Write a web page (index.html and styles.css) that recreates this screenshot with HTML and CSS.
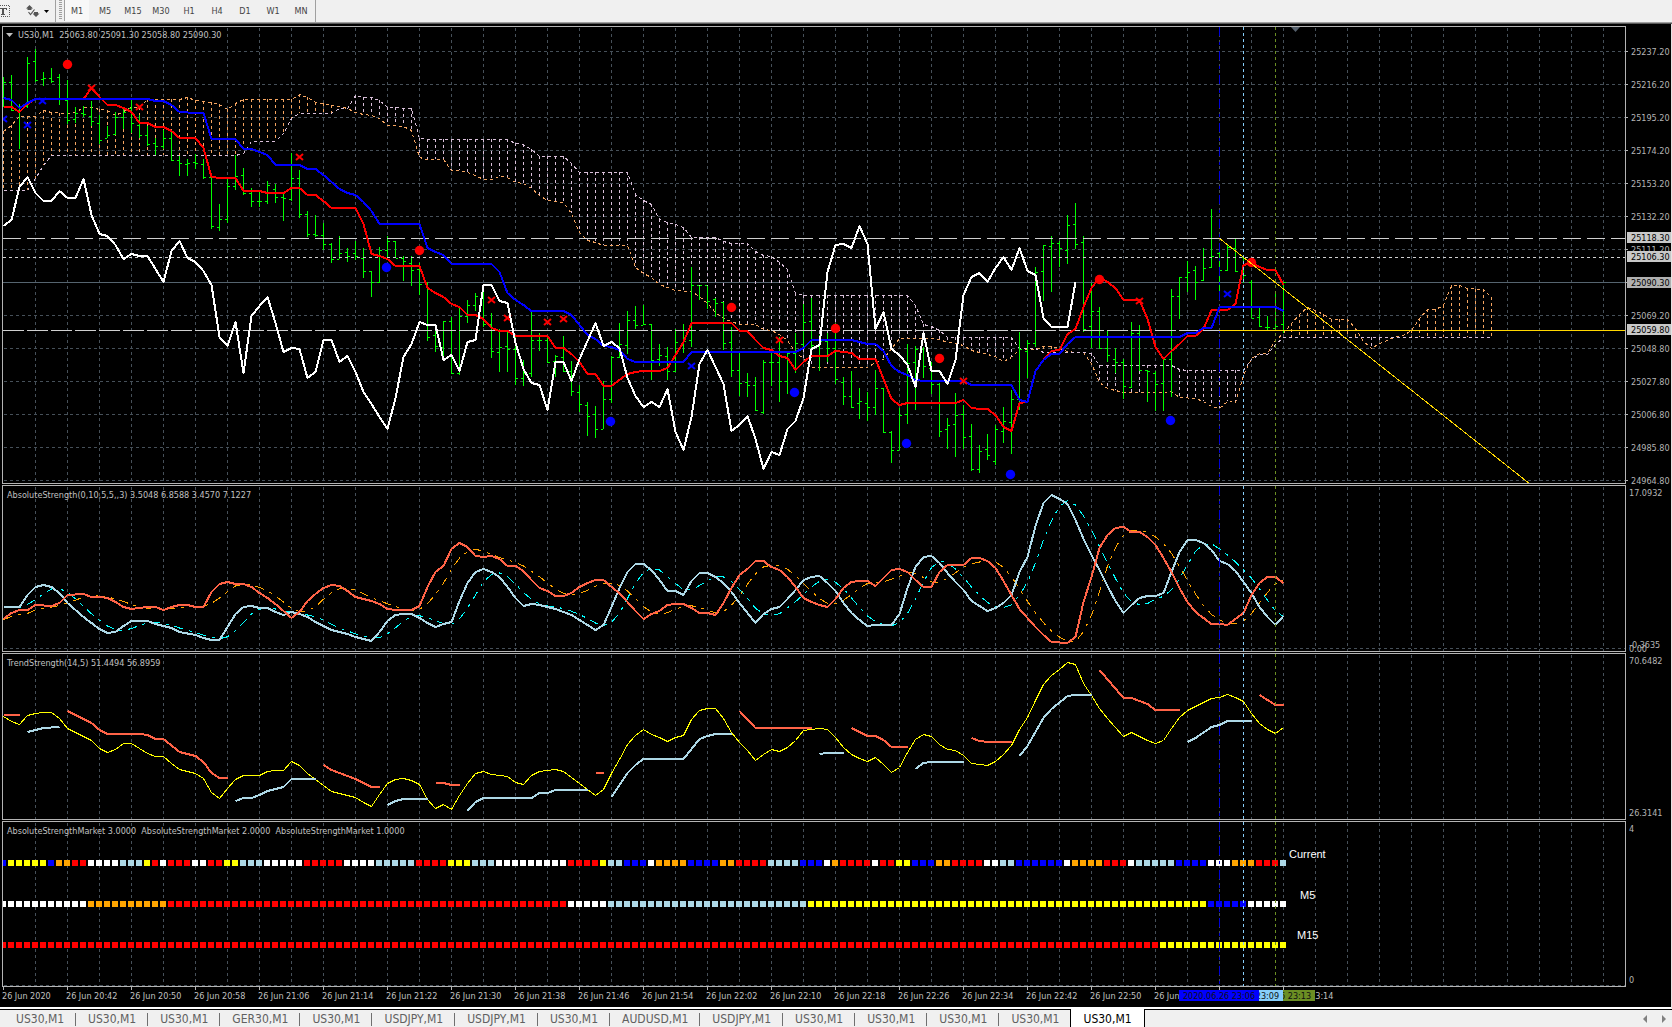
FILE: index.html
```html
<!DOCTYPE html>
<html lang="en">
<head>
<meta charset="utf-8">
<title>US30,M1</title>
<link rel="stylesheet" href="styles.css">
</head>
<body>
<header class="toolbar">
  <button class="tool tool-text" aria-label="Text label">
    <svg width="10" height="14" viewBox="0 0 10 14"><path d="M0 1.5H9.5V12.5H0" fill="none" stroke="#555" stroke-dasharray="1 1"/><path d="M0 4h7v2H6V5H4v5h1v1H1v-1h1V5H0z" fill="#555"/></svg>
  </button>
  <button class="tool tool-arrows" aria-label="Arrows">
    <svg width="24" height="14" viewBox="0 0 24 14"><path d="M3.500 1l3.500 3.500H5.500V6h-4V4.500H0z" fill="#555"/><path d="M10 13L6.500 9.500H8V8h4v1.500h1.500z" fill="#555"/><path d="M2.500 8l2 2.500L8.500 5.500" fill="none" stroke="#555" stroke-width="1.200"/><path d="M18 6h5l-2.500 3z" fill="#000"/></svg>
  </button>
  <span class="grip"></span>
  <nav class="frames" aria-label="Timeframes">
    <button class="frame frame-on">M1</button><button class="frame">M5</button><button class="frame">M15</button><button class="frame">M30</button><button class="frame">H1</button><button class="frame">H4</button><button class="frame">D1</button><button class="frame">W1</button><button class="frame">MN</button>
  </nav>
</header>
<main class="window">
  <section class="pane">
    <div class="plot"><svg id="price" class="canvas canvas-price"></svg>
      <h1 class="caption caption-main">US30,M1  25063.80 25091.30 25058.80 25090.30</h1></div>
    <svg id="price-axis" class="axis"></svg>
  </section>
  <section class="pane">
    <div class="plot"><svg id="strength" class="canvas canvas-sub"></svg>
      <h2 class="caption">AbsoluteStrength(0,10,5,5,,3) 3.5048 6.8588 3.4570 7.1227</h2></div>
    <svg id="strength-axis" class="axis"></svg>
  </section>
  <section class="pane">
    <div class="plot"><svg id="trend" class="canvas canvas-sub"></svg>
      <h2 class="caption">TrendStrength(14,5) 51.4494 56.8959</h2></div>
    <svg id="trend-axis" class="axis"></svg>
  </section>
  <section class="pane">
    <div class="plot"><svg id="market" class="canvas canvas-market"></svg>
      <h2 class="caption">AbsoluteStrengthMarket 3.0000  AbsoluteStrengthMarket 2.0000  AbsoluteStrengthMarket 1.0000</h2></div>
    <svg id="market-axis" class="axis"></svg>
  </section>
  <div class="times">
    <span>26 Jun 2020</span><span>26 Jun 20:42</span><span>26 Jun 20:50</span><span>26 Jun 20:58</span><span>26 Jun 21:06</span><span>26 Jun 21:14</span><span>26 Jun 21:22</span><span>26 Jun 21:30</span><span>26 Jun 21:38</span><span>26 Jun 21:46</span><span>26 Jun 21:54</span><span>26 Jun 22:02</span><span>26 Jun 22:10</span><span>26 Jun 22:18</span><span>26 Jun 22:26</span><span>26 Jun 22:34</span><span>26 Jun 22:42</span><span>26 Jun 22:50</span><span>26 Jun 22:58</span><span>26 Jun 23:06</span><span>26 Jun 23:14</span>
    <b class="stamp stamp-olive">2020.06.26 23:13</b>
    <b class="stamp stamp-sky">2020.06.26 23:09</b>
    <b class="stamp stamp-blue">2020.06.26 23:06</b>
  </div>
</main>
<footer class="tabs">
  <nav class="tablist" aria-label="Charts">
    <a class="tab" href="#">US30,M1</a><a class="tab" href="#">US30,M1</a><a class="tab" href="#">US30,M1</a><a class="tab" href="#">GER30,M1</a><a class="tab" href="#">US30,M1</a><a class="tab" href="#">USDJPY,M1</a><a class="tab" href="#">USDJPY,M1</a><a class="tab" href="#">US30,M1</a><a class="tab" href="#">AUDUSD,M1</a><a class="tab" href="#">USDJPY,M1</a><a class="tab" href="#">US30,M1</a><a class="tab" href="#">US30,M1</a><a class="tab" href="#">US30,M1</a><a class="tab" href="#">US30,M1</a><a class="tab tab-on" href="#">US30,M1</a>
  </nav>
  <button class="scroll" aria-label="Scroll left"><svg width="4" height="8"><path d="M4 0v8L0 4z" fill="#808080"/></svg></button>
  <button class="scroll" aria-label="Scroll right"><svg width="4" height="8"><path d="M0 0v8l4-4z" fill="#808080"/></svg></button>
</footer>
<script src="chart.js"></script>
</body>
</html>
```
FILE: styles.css
```css
* { box-sizing: border-box; }
body {
  margin: 0;
  background: #f0f0f0;
  font: 9px/12px "DejaVu Sans Condensed", "DejaVu Sans", sans-serif;
}
button { border: 0; padding: 0; background: none; font: inherit; color: inherit; }
svg { display: block; }

.toolbar {
  display: flex;
  align-items: stretch;
  height: 24px;
  border-bottom: 1px solid #5a5a5a;
  box-shadow: inset 0 -1px #a0a0a0;
  color: #444;
}
.tool { display: flex; align-items: center; padding-bottom: 2px; }
.tool-text { width: 26px; }
.tool-arrows { width: 30px; border-right: 1px solid #a0a0a0; }
.grip {
  width: 3px;
  margin: 0 3px 4px;
  background: repeating-linear-gradient(#a0a0a0 0 1px, #f0f0f0 1px 2px);
}
.frames { display: flex; gap: 4px; padding: 0 2px 2px 0; border-right: 1px solid #a0a0a0; }
.frame { width: 24px; height: 21px; text-align: center; }
.frame-on {
  background: #f8f8f8;
  box-shadow: -1px 0 #a0a0a0;
}

.window {
  padding-top: 2px;
  background: #000;
  border-right: 1px solid #e3e3e3;
  border-bottom: 2px solid #fff;
  color: #c0c0c0;
}
.pane { display: flex; padding-left: 2px; margin-bottom: 1px; }
.pane:nth-child(4) { margin-bottom: 0; }
.plot { position: relative; flex: 1; min-width: 0; border: 1px solid #b4b4b4; }
.canvas { width: 100%; overflow: hidden; }
.canvas-price { height: 456px; }
.canvas-sub { height: 165px; }
.canvas-market { height: 164px; }
.axis { width: 45px; overflow: hidden; fill: #b4b4b4; align-self: stretch; height: auto; }
.caption {
  position: absolute;
  top: 3px;
  left: 4px;
  margin: 0;
  font-size: 9px;
  font-weight: 400;
  white-space: pre;
}
.caption-main { top: 2px; left: 15px; }
.note { fill: #fff; font: 11px "Liberation Sans", sans-serif; }

.times {
  position: relative;
  display: flex;
  height: 20px;
  padding: 3px 0 0 2px;
  overflow: hidden;
  background: repeating-linear-gradient(90deg, transparent 0 3px, #b4b4b4 3px 4px, transparent 4px 64px) 0 0 / 1284px 3px no-repeat;
}
.times span { flex: none; width: 64px; white-space: nowrap; }
.stamp {
  position: absolute;
  top: 3px;
  width: 80px;
  height: 11px;
  line-height: 12px;
  font-weight: 400;
  text-align: center;
  color: #101010;
}
.stamp-olive { left: 1235px; background: #6b8e23; }
.stamp-sky { left: 1203px; background: #87cefa; }
.stamp-blue { left: 1179px; background: #00f; }

.tabs {
  display: flex;
  height: 18px;
  background: #f0f0f0;
  color: #606060;
  font-size: 12px;
  line-height: 18px;
}
.tablist { display: flex; flex: 1; padding-left: 4px; border-top: 1px solid #000; }
.tab {
  padding: 0 12px;
  height: 17px;
  color: inherit;
  text-decoration: none;
  background: linear-gradient(#707070, #707070) right 3px / 1px 13px no-repeat;
}
.tab-on {
  height: 18px;
  margin: -1px 0 0 -1px;
  padding-top: 1px;
  background: #fff;
  border: solid #000;
  border-width: 0 1px;
  color: #000;
}
.scroll { width: 19px; padding-left: 8px; border-top: 1px solid #000; }
.scroll:last-child { width: 18px; }
```
FILE: chart.js
```js
const NS = 'http://www.w3.org/2000/svg';
const STEP = 8;
const barX = k => 3.5 + STEP * k;

function add(parent, tag, attrs, text) {
  const el = document.createElementNS(NS, tag);
  for (const name in attrs) el.setAttribute(name, attrs[name]);
  if (text !== undefined) el.textContent = text;
  parent.appendChild(el);
  return el;
}

// Points are written "bar,y"; y counts from the top of the window.
const parse = s => s.trim().split(/\s+/).map(p => p.split(',').map(Number));

function fill(points) {
  const out = [];
  points.forEach(([k, y], i) => {
    if (i) {
      const [pk, py] = points[i - 1];
      for (let j = pk + 1; j < k; j++) out[j] = py + (y - py) * (j - pk) / (k - pk);
    }
    out[k] = y;
  });
  return out;
}

function line(g, points, stroke, width, dash) {
  const shift = width === 1 ? 0.5 : 0;
  add(g, 'polyline', {
    points: points.map(([k, y]) => barX(k) + ',' + (y + shift)).join(' '),
    fill: 'none', stroke, 'stroke-width': width,
    'stroke-dasharray': dash || 'none', 'stroke-linejoin': 'round',
    'shape-rendering': 'crispEdges'
  });
}

function rule(g, x1, y1, x2, y2, stroke, dash) {
  return add(g, 'line', { x1, y1, x2, y2, stroke, 'stroke-dasharray': dash || 'none', 'shape-rendering': 'crispEdges' });
}

const GRID = '#465059';

function pane(id, top, height) {
  const g = add(document.getElementById(id), 'g', { transform: `translate(-3 ${-top})` });
  for (let x = 35.5; x < 4000; x += 32) rule(g, x, top + 1, x, top + height, GRID, '3 3');
  return g;
}

function verticals(g, top, height) {
  rule(g, 1219.5, top, 1219.5, top + height, '#0000d8', '9 6 3 6');
  rule(g, 1243.5, top, 1243.5, top + height, '#87cefa', '3 3');
  rule(g, 1275.5, top, 1275.5, top + height, '#6b8e23', '3 3');
}

function label(g, x, y, text, attrs) {
  add(g, 'text', Object.assign({ x, y: y + 3 }, attrs), text);
}

// ---------- price pane ----------
const spanA = parse(`0,131 1,125 2,116 4,116 5,110 6,112 8,113 9,112 10,107 11,107 12,109 13,110 14,115 15,111 16,107 17,107 18,99 22,99 23,97
24,100 25,101 26,102 27,104 28,109 29,103 30,99 36,99 37,94 38,97 39,102 40,103 41,105 42,106 43,108 44,112 45,114 46,115 47,118 48,125 50,126
51,130 52,157 53,159 55,159 56,170 57,170 58,172 59,175 60,179 61,179 62,176 63,177 64,182 65,183 66,188 67,195 68,200 69,201 70,202 71,213
72,232 73,240 74,242 75,245 78,245 79,267 80,273 81,277 82,284 83,287 84,290 86,291 87,296 88,303 89,312 90,318 91,321 92,324 94,324 95,329
96,330 97,334 98,340 99,352 100,358 101,367 108,367 109,362 110,359 111,348 112,338 116,338 117,339 118,342 119,343 120,345 121,350 122,352
123,354 124,356 125,361 126,357 127,349 129,349 130,346 131,346 132,348 133,351 134,352 135,352 136,363 137,382 138,388 139,390 140,392 145,392
146,391 147,397 149,398 150,401 151,406 152,408 153,401 154,402 155,375 156,358 157,353 158,353 159,340 160,333 161,323 162,314 163,307 164,310
165,314 166,319 168,319 169,328 170,341 171,348 172,343 173,340 174,336 175,335 176,330 177,318 178,309 179,309 180,305 181,285 182,285 183,288
185,289 186,297`);
const spanB = parse(`0,190 3,190 4,178 5,165 6,155 29,155 30,153 31,141 34,141 35,133 36,118 37,113 41,113 42,108 43,108 44,95 45,97 46,97 47,100
48,107 51,108 52,138 53,139 63,139 64,143 65,144 66,149 67,156 70,156 71,163 72,172 78,172 79,194 80,200 81,204 82,219 83,222 84,224 85,227
86,237 89,237 90,241 91,243 93,243 94,251 95,255 96,256 97,262 98,269 99,293 100,295 113,295 114,305 115,324 116,326 117,330 118,337 126,337
127,348 129,348 130,352 135,352 136,353 137,365 146,365 147,369 148,370 155,370 156,359 157,354 158,354 159,344 160,337 186,337`);
const kijun = parse(`0,98 1,100 2,108 3,103 4,99 18,99 19,101 20,101 21,105 22,112 24,113 25,113 26,139 29,139 30,149 31,149 32,152 33,155 34,165
37,165 38,169 39,169 40,175 41,182 42,189 43,193 44,195 45,202 46,211 47,224 52,224 53,248 54,252 55,255 56,264 61,264 62,272 63,293 64,300
65,305 66,311 70,311 71,315 72,325 73,335 74,339 75,346 76,347 77,350 78,359 79,362 85,362 86,352 99,352 100,348 101,340 106,340 107,342
108,344 109,344 110,351 111,366 112,372 113,375 114,380 115,381 120,381 121,385 126,385 127,400 128,402 129,371 130,360 131,354 132,354 133,344
134,337 147,337 148,333 149,333 150,328 151,328 152,307 159,307 160,311`);
const tenkan = parse(`0,107 1,107 2,112 3,104 4,99 10,99 11,88 12,97 13,105 14,105 15,108 16,112 17,123 18,123 19,127 20,127 21,131 22,138 24,138
25,148 26,177 27,178 29,178 30,191 32,191 33,193 35,193 36,188 37,188 38,195 39,195 40,201 41,208 44,208 45,224 46,254 47,256 48,259 49,266
52,266 53,288 54,293 55,297 56,304 57,307 58,315 59,315 60,319 61,328 62,331 63,331 64,336 68,336 69,348 70,348 71,354 72,362 73,374 74,374
75,386 76,386 77,380 78,374 79,372 80,371 82,371 83,368 84,355 85,342 86,323 91,323 92,331 93,331 94,340 95,348 96,350 97,356 98,358 99,370
100,362 101,356 103,356 104,351 105,352 106,353 107,359 109,359 110,379 111,399 112,405 113,403 119,403 120,400 121,408 122,409 123,409 124,415
125,427 126,431 127,403 128,402 129,371 130,360 131,351 132,350 133,334 134,329 135,307 136,288 137,277 138,282 139,288 140,300 142,300 143,319
144,347 145,359 146,351 147,344 148,336 149,336 150,329 151,310 153,310 154,304 155,265 156,263 157,267 158,270 159,270 160,285`);
const chikou = parse(`0,226 1,220 2,187 3,177 4,193 5,201 6,201 7,191 8,198 9,198 10,179 11,215 12,234 13,236 14,245 15,259 16,254 17,256 18,256
19,269 20,282 21,251 22,241 23,258 24,262 25,271 26,285 27,337 28,346 29,322 30,373 31,316 32,306 33,297 34,323 35,352 36,348 37,349 38,378
39,372 40,340 41,340 42,362 43,356 44,372 45,392 46,404 47,417 48,429 49,398 50,357 51,344 52,322 53,325 54,325 55,360 56,355 57,371 58,342
59,340 60,285 61,285 62,301 63,303 64,343 65,369 66,383 67,385 68,410 69,362 70,362 71,381 72,359 73,341 74,323 75,346 76,342 77,348 78,378
79,396 80,407 81,402 82,407 83,389 84,432 85,450 86,417 87,364 88,350 89,367 90,384 91,431 92,425 93,416 94,439 95,469 96,452 97,455 98,429
99,421 100,398 101,349 102,345 103,272 104,245 105,244 106,248 107,226 108,244 109,329 110,312 111,349 112,355 113,365 114,387 115,333 116,371
117,371 118,384 119,360 120,295 121,277 122,273 123,282 124,268 125,257 126,270 127,248 128,271 129,275 130,318 131,327 133,327 134,282`);

// high, low, open, close of every bar
const bars = `77 107 80 82;75 111 82 110;104 149 110 106;57 108 106 63;49 82 61 80;72 86 79 78;68 83 78 81;74 105 77 99;80 124 100 120;107 123 119 113;
106 117 113 114;101 126 116 121;115 144 123 140;126 138 138 135;112 135 134 117;107 129 117 112;100 133 108 123;115 138 125 135;126 146 135 144;138 155 143 146;
130 149 146 138;131 161 138 160;156 176 160 163;159 176 164 163;154 169 162 163;159 179 164 177;177 229 177 226;204 231 227 219;178 223 219 186;155 190 186 176;
168 195 175 193;188 207 193 201;192 207 201 201;181 204 201 185;184 203 189 197;194 221 197 198;153 201 199 178;170 218 178 214;211 237 214 234;215 237 234 235;
223 250 235 244;243 263 244 259;236 259 259 253;248 262 252 256;241 260 253 256;248 278 258 271;271 297 271 282;247 283 282 250;236 257 250 241;241 258 241 258;
256 281 258 261;256 286 263 270;263 295 269 284;282 341 284 337;325 352 335 346;321 359 347 321;317 374 321 373;307 375 373 316;300 323 316 305;293 311 305 296;
288 327 296 324;313 358 324 351;329 372 352 347;331 372 346 349;337 385 349 378;360 386 378 373;312 377 373 340;333 351 340 340;335 363 340 362;355 377 361 356;
336 372 357 371;361 396 371 391;385 412 392 404;402 436 405 416;406 438 414 429;381 429 429 399;356 403 399 357;323 358 357 344;311 354 345 320;306 329 320 325;
305 325 325 324;324 380 324 360;344 366 359 355;347 380 356 371;329 372 371 342;324 353 343 341;267 347 340 285;286 300 285 285;286 309 285 301;298 317 299 303;
302 350 302 343;327 377 342 370;352 396 370 383;373 397 382 385;377 411 385 410;360 414 412 362;352 386 362 362;337 402 362 381;353 394 381 353;333 373 353 343;
304 347 344 322;298 352 321 345;335 371 345 341;333 362 341 348;323 384 348 379;377 405 382 396;371 408 396 407;388 419 403 401;392 421 403 407;370 415 407 388;
388 433 388 432;431 463 432 450;408 450 450 415;344 424 414 363;346 410 362 349;347 378 349 366;362 394 368 384;383 437 384 431;418 449 429 425;393 457 424 415;
405 449 414 437;424 471 436 469;445 473 469 451;434 460 449 455;425 465 461 429;407 443 431 421;390 454 422 399;332 410 399 349;340 378 351 343;267 347 343 272;
245 301 271 245;236 292 246 243;241 267 243 248;215 264 250 225;203 249 224 244;236 332 242 329;283 348 326 311;307 349 311 348;330 362 348 355;348 373 359 362;
359 399 362 386;322 388 387 333;325 371 333 370;370 402 370 371;371 411 373 384;360 411 383 359;289 397 359 296;277 319 296 277;261 292 277 272;266 300 270 282;
248 281 280 268;209 268 267 256;252 297 253 270;244 271 270 247;239 272 248 271;257 283 257 275;280 318 282 318;307 327 317 326;316 330 327 327;292 329 328 326;
282 333 324 282`.split(';').map(b => b.trim().split(' ').map(Number));

{
  const g = pane('price', 27, 456);
  for (let y = 51.5; y < 483; y += 33) rule(g, 4, y, 4000, y, GRID, '3 3');
  add(g, 'path', { d: 'M1291 27h9l-4.500 5z', fill: '#55606c' });
  rule(g, 3, 282.5, 4000, 282.5, '#55646f');

  const a = fill(spanA), b = fill(spanB);
  a.forEach((y, k) => {
    if (Math.abs(y - b[k]) > 4) {
      rule(g, barX(k), Math.min(y, b[k]), barX(k), Math.max(y, b[k]), y < b[k] ? '#f4a460' : '#d8bfd8', '3 3');
    }
  });
  line(g, spanA, '#f4a460', 1, '3 3');
  line(g, spanB, '#d8bfd8', 1, '3 3');

  bars.forEach(([h, l, o, c], k) => {
    const x = 3 + STEP * k;
    add(g, 'path', { d: `M${x}.5 ${h}V${l}M${x - 2} ${o}.5h2M${x + 1} ${c}.5h2`, stroke: '#00ff00', 'shape-rendering': 'crispEdges' });
  });

  rule(g, 3, 238.5, 4000, 238.5, '#d0d0d0', '18 6');
  rule(g, 3, 257.5, 4000, 257.5, '#d0d0d0', '3 3');
  rule(g, 3, 330.5, 1219, 330.5, '#d0d0d0', '21 3');

  line(g, tenkan, '#ff0000', 2);
  line(g, kijun, '#0000ff', 2);
  const cross = (x, y, c) => add(g, 'path', { d: `M${x - 3} ${y - 3}l7 6M${x + 4} ${y - 3}l-7 6`, stroke: c, 'stroke-width': 2 });
  [[91, 88], [139, 107], [299, 157], [491, 300], [507, 318], [547, 322], [563, 319], [779, 340], [963, 381], [1139, 301]].forEach(p => cross(...p, '#ff0000'));
  [[3, 119], [27, 125], [42, 101], [691, 366], [1227, 294]].forEach(p => cross(...p, '#0000ff'));
  line(g, chikou, '#ffffff', 2);

  const dot = (cx, cy, c) => add(g, 'circle', { cx: cx + .5, cy: cy + .5, r: 4.7, fill: c });
  [[67, 64], [419, 250], [731, 307], [835, 328], [939, 358], [1099, 279], [1251, 262]].forEach(p => dot(...p, '#ff0000'));
  [[386, 267], [610, 421], [794, 392], [906, 443], [1010, 474], [1170, 420]].forEach(p => dot(...p, '#0000ff'));

  verticals(g, 27, 456);
  rule(g, 1219, 330.5, 4000, 330.5, '#ffd700');
  rule(g, 1219, 238, 1530, 484, '#ffd700');
  add(g, 'path', { d: 'M6 33h7l-3.500 4z', fill: '#c0c0c0' });

  const ax = add(document.getElementById('price-axis'), 'g', { transform: 'translate(-1626 -26)' });
  ['25237.20', '25216.20', '25195.20', '25174.20', '25153.20', '25132.20', '25111.20', '', '25069.20', '25048.80', '25027.80', '25006.80', '24985.80', '24964.80'].forEach((t, i) => {
    rule(ax, 1626, 51.5 + 33 * i, 1628, 51.5 + 33 * i, '#b4b4b4');
    if (t) label(ax, 1631, 51.5 + 33 * i, t);
  });
  [['25118.30', 232, '#c8c8c8'], ['25106.30', 251, '#c8c8c8'], ['25090.30', 277, '#b0b0b0'], ['25059.80', 324, '#c8c8c8']].forEach(([t, y, c]) => {
    add(ax, 'rect', { x: 1627, y, width: 44, height: 11, fill: c });
    label(ax, 1631, y + 6, t, { fill: '#000' });
  });
}

// ---------- absolute strength ----------
const bulls = parse(`0,607 2,607 3,595 4,587 5,585 6,587 7,593 8,603 9,610 10,617 11,623 12,629 13,633 14,632 15,626 16,621 18,621 19,624 20,626 21,628
22,632 24,635 25,638 26,640 27,640 28,627 29,614 30,607 31,606 32,608 33,608 34,612 35,615 36,612 37,614 38,617 39,622 40,626 41,630 43,634 44,637
45,639 46,641 47,632 48,621 49,615 50,614 51,614 52,618 53,623 54,627 55,624 56,622 57,601 58,583 59,572 60,569 61,572 62,577 63,587 64,598 65,606
66,604 67,605 69,609 70,612 71,615 72,620 73,625 74,630 75,625 76,607 77,588 78,572 79,564 80,564 81,570 82,580 83,591 84,591 85,595 86,581 87,573
88,573 89,577 90,583 91,592 92,603 93,613 94,623 95,614 96,609 97,607 98,599 99,590 100,580 101,577 102,576 103,583 104,591 105,603 106,613 107,620
108,626 109,625 111,625 112,614 113,588 114,567 115,557 116,556 117,563 118,573 119,582 120,590 121,601 122,606 123,611 124,608 125,603 126,595
127,572 128,557 129,526 130,503 131,495 132,499 133,504 134,520 135,539 136,555 137,570 138,586 139,601 140,613 141,605 142,598 143,596 144,596
145,593 146,572 147,552 148,540 149,540 150,543 151,550 152,561 153,564 154,571 155,582 156,593 157,607 158,617 159,625 160,616`);
const bears = parse(`0,619 1,613 2,610 3,610 4,605 6,606 7,603 8,595 10,594 11,597 12,597 13,598 14,602 15,607 16,609 17,608 18,607 19,607 20,610 21,607
22,605 23,605 24,607 25,607 26,592 27,584 28,582 29,584 30,584 31,587 32,593 33,598 34,604 35,611 36,618 37,612 38,601 39,594 40,588 41,585 42,586
43,591 44,597 45,599 46,601 47,604 48,609 49,610 51,610 52,606 53,587 54,572 55,566 56,549 57,543 58,547 59,556 60,557 61,556 62,559 63,566 64,566
65,571 66,580 67,588 68,591 69,596 70,596 71,593 72,587 73,583 74,580 75,580 76,587 77,593 78,602 79,611 80,619 81,614 82,611 83,605 84,604 85,604
86,608 87,613 88,613 89,615 90,603 91,588 92,575 93,569 94,561 95,561 96,567 97,570 98,577 99,587 100,598 101,602 102,605 103,607 104,599 105,588
106,582 107,581 108,581 109,586 110,578 111,570 112,569 113,572 114,580 115,587 116,587 117,572 118,565 120,565 121,558 122,558 123,561 124,568
125,581 126,595 127,609 128,618 129,627 130,635 131,642 133,643 134,637 135,602 136,577 137,548 138,535 139,528 140,527 141,532 142,532 143,537
144,545 145,558 146,572 147,588 148,602 149,612 150,618 151,624 152,624 153,625 154,619 155,613 156,595 157,583 158,577 159,577 160,583`);

function average(points, n) {
  const v = fill(points);
  return v.map((_, k) => {
    const part = v.slice(Math.max(0, k - n + 1), k + 1);
    return [k, part.reduce((s, y) => s + y, 0) / part.length];
  });
}

{
  const g = pane('strength', 486, 165);
  rule(g, 4, 648.5, 4000, 648.5, GRID, '3 3');
  line(g, average(bulls, 4), '#00ffff', 1, '9 6 3 6');
  line(g, average(bears, 4), '#ffa500', 1, '9 6 3 6');
  line(g, bulls, '#add8e6', 2);
  line(g, bears, '#ff6347', 2);
  verticals(g, 486, 165);
  const ax = add(document.getElementById('strength-axis'), 'g', { transform: 'translate(-1626 -485)' });
  label(ax, 1629, 492.5, '17.0932');
  label(ax, 1629, 648.5, '0.00');
  label(ax, 1629, 644.5, '-0.3635');
}

// ---------- trend strength ----------
const trend = parse(`0,716 1,721 2,724 3,715 4,713 5,712 6,712 7,718 8,728 9,732 10,736 11,740 12,748 13,752 14,749 15,743 16,743 17,748 18,753 19,756
20,756 21,763 22,769 23,771 24,773 25,778 26,792 27,798 28,788 29,779 30,775 32,775 33,771 34,770 35,770 36,761 37,765 38,773 39,779 40,785 41,791
42,793 43,795 44,797 45,802 46,806 47,794 48,783 49,779 50,778 51,780 52,784 53,799 54,808 55,804 56,809 57,795 58,783 59,773 60,771 61,774 62,775
63,776 64,782 65,784 66,775 67,771 69,769 70,771 71,777 72,783 73,789 74,795 75,789 76,773 77,759 78,744 79,735 80,729 81,734 82,737 83,741 84,737
85,735 86,719 87,710 88,708 89,708 90,718 91,732 92,742 93,750 94,760 95,754 96,749 97,751 98,747 99,740 100,730 101,729 102,728 103,729 104,737
105,747 106,754 107,758 108,761 109,757 110,764 111,772 112,767 113,752 114,739 115,734 116,736 117,744 118,749 119,750 120,755 121,763 122,764
123,765 124,761 125,754 126,745 127,729 128,717 129,700 130,684 131,675 132,669 133,662 134,664 135,683 136,695 137,708 138,718 139,727 140,736
141,732 142,736 143,740 144,743 145,740 146,728 147,717 148,710 149,706 150,702 151,698 152,697 153,694 154,697 155,701 156,713 157,723 158,729
159,733 160,727`);
const upper = ['0,715 2,715', '8,711 11,723 12,730 13,734 17,734 18,735 19,739 20,739 22,752 24,756 25,762 26,773 27,778 28,778',
  '40,765 41,770 42,773 44,779 46,787 47,787', '54,783 55,783 56,785 57,785', '74,773 75,773', '92,711 94,728 101,728',
  '106,728 108,736 109,736 110,740 111,747 113,747', '121,738 122,741 123,742 126,742', '137,670 140,698 141,698 143,704 144,710 147,710', '157,695 159,705 160,705'];
const lower = ['3,732 5,728 7,727', '29,801 30,798 31,798 32,795 33,791 35,787 36,779 39,779', '48,805 49,801 50,799 53,799',
  '58,811 59,802 60,798 66,798 67,793 68,793 69,790 73,790', '76,797 78,773 79,765 80,759 85,759 87,739 88,736 89,734 91,734',
  '102,754 103,753 105,753', '114,769 115,763 116,762 120,762', '127,756 128,746 130,718 131,709 133,696 134,695 136,695', '148,742 149,738 151,727 152,725 153,721 156,721'];

{
  const g = pane('trend', 654, 165);
  line(g, trend, '#ffff00', 1);
  upper.forEach(s => line(g, parse(s), '#ff6347', 2));
  lower.forEach(s => line(g, parse(s), '#add8e6', 2));
  verticals(g, 654, 165);
  const ax = add(document.getElementById('trend-axis'), 'g', { transform: 'translate(-1626 -653)' });
  label(ax, 1629, 660.5, '70.6482');
  label(ax, 1629, 812.5, '26.3141');
}

// ---------- market states, run-length coded ----------
const COLOURS = { B: '#0000ff', Y: '#ffff00', O: '#ffa500', R: '#ff0000', W: '#ffffff', L: '#add8e6' };
const states = [
  [860, 'B1 Y5 B1 O2 R2 W4 L3 Y1 R1 W1 R3 W2 R2 Y2 L3 W5 R5 W4 L5 R4 Y3 L3 W9 R4 Y1 L2 B3 W1 O4 B4 O2 R4 L4 B3 W1 O1 R4 W1 R2 Y2 B3 O2 R4 W2 L2 B6 W1 O4 R3 W1 L5 B4 W3 O3 R3 L1'],
  [901, 'W11 O10 R50 W5 L25 Y50 B5 W5'],
  [942, 'R145 Y16']
];

{
  const g = pane('market', 822, 164);
  rule(g, 4, 985.5, 4000, 985.5, GRID, '3 3');
  for (const [y, runs] of states) {
    let k = 0;
    for (const run of runs.split(' ')) {
      for (let n = +run.slice(1); n > 0; n--, k++) {
        add(g, 'rect', { x: STEP * k, y, width: 6, height: 6, fill: COLOURS[run[0]] });
      }
    }
  }
  verticals(g, 822, 164);
  [[1289, 858, 'Current'], [1300, 899, 'M5'], [1297, 939, 'M15']].forEach(([x, y, t]) => add(g, 'text', { x, y, class: 'note' }, t));
  const ax = add(document.getElementById('market-axis'), 'g', { transform: 'translate(-1626 -821)' });
  label(ax, 1629, 828.5, '4');
  label(ax, 1629, 979.5, '0');
}
```
